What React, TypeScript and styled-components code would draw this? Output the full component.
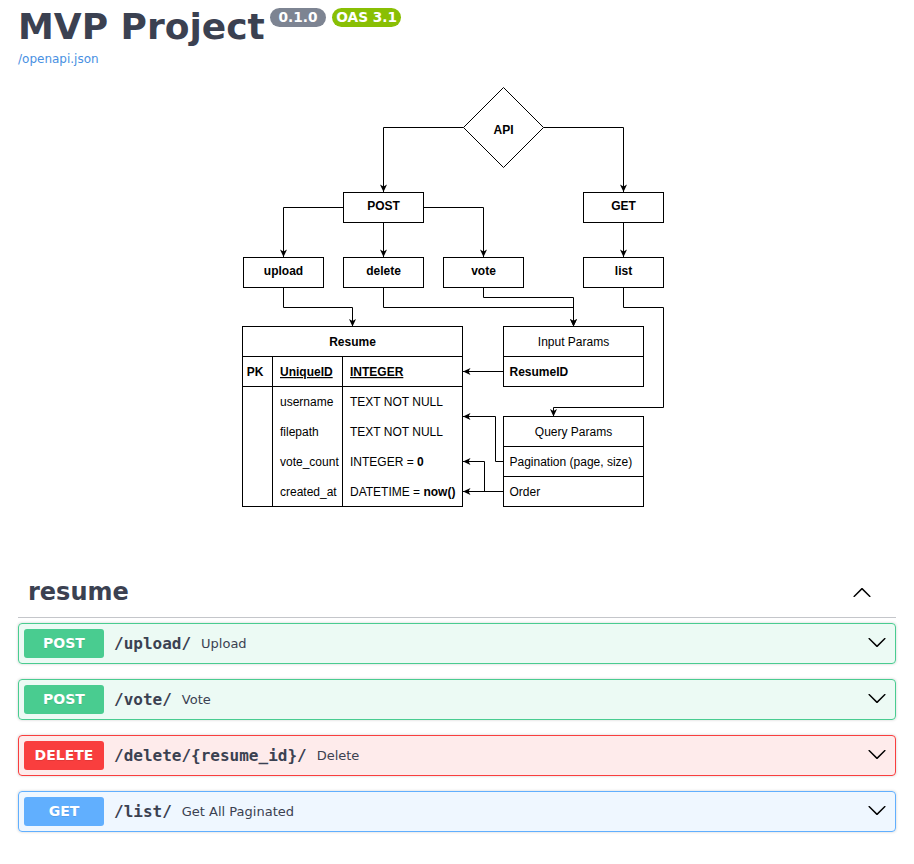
import React from "react";
import styled, { createGlobalStyle, css } from "styled-components";

const GlobalStyle = createGlobalStyle`
  html, body { margin: 0; padding: 0; background: #fff; }
  body { font-family: "DejaVu Sans", sans-serif; color: #3b4151; }
`;

type Method = "post" | "delete" | "get";

const methodColors: Record<Method, { main: string; bg: string }> = {
  post: { main: "#49cc90", bg: "rgba(73,204,144,.1)" },
  delete: { main: "#f93e3e", bg: "rgba(249,62,62,.1)" },
  get: { main: "#61affe", bg: "rgba(97,175,254,.1)" },
};

const Page = styled.div`
  padding: 0 18px 40px;
`;

const Info = styled.section`
  display: flex;
  flex-direction: column;
`;

const TitleRow = styled.div`
  display: flex;
  align-items: flex-start;
  margin-top: 6px;
`;

const Title = styled.h2`
  margin: 0;
  font-family: "DejaVu Sans", sans-serif;
  font-size: 36px;
  line-height: 42px;
  font-weight: 700;
  color: #3b4151;
`;

const Badge = styled.small<{ $bg: string; $gap: number }>`
  display: inline-block;
  margin: 2px 0 0 ${(p) => p.$gap}px;
  padding: 2px 4px;
  border-radius: 57px;
  background: ${(p) => p.$bg};
  color: #fff;
  font-family: "DejaVu Sans", sans-serif;
  font-size: 13.7px;
  line-height: 15px;
  font-weight: 700;
  white-space: pre;
`;

const UrlLink = styled.a`
  align-self: flex-start;
  margin-top: 4px;
  font-family: "DejaVu Sans", sans-serif;
  font-size: 12px;
  line-height: 14px;
  color: #4990e2;
  text-decoration: none;
`;

const DiagramSvg = styled.svg`
  display: block;
  margin-top: 14px;
  font-family: "Liberation Sans", Arial, sans-serif;
  font-size: 12px;
`;

const TagSection = styled.section`
  margin-top: 54px;
  display: flex;
  flex-direction: column;
`;

const TagHeader = styled.div`
  display: flex;
  align-items: center;
  padding: 11px 20px 9px 10px;
  border-bottom: 1px solid rgba(59, 65, 81, 0.3);
`;

const TagTitle = styled.h3`
  flex: 1;
  margin: 0;
  font-family: "DejaVu Sans", sans-serif;
  font-size: 24px;
  line-height: 31px;
  font-weight: 700;
  color: #3b4151;
`;

const ArrowIcon = styled.svg<{ $mr: number; $dy: number }>`
  display: block;
  width: 20px;
  height: 20px;
  margin-right: ${(p) => p.$mr}px;
  transform: translateY(${(p) => p.$dy}px);
  fill: #000;
  flex: none;
`;

const OpList = styled.div`
  display: flex;
  flex-direction: column;
  gap: 15px;
  margin-top: 5px;
`;

const OpBlock = styled.div<{ $method: Method }>`
  border-radius: 4px;
  box-shadow: 0 0 3px rgba(0, 0, 0, 0.19);
  ${(p) => css`
    border: 1px solid ${methodColors[p.$method].main};
    background: ${methodColors[p.$method].bg};
  `}
`;

const Summary = styled.div`
  display: flex;
  align-items: center;
  padding: 5px;
`;

const MethodBadge = styled.span<{ $method: Method }>`
  min-width: 80px;
  padding: 6px 0;
  border-radius: 3px;
  background: ${(p) => methodColors[p.$method].main};
  color: #fff;
  font-family: "DejaVu Sans", sans-serif;
  font-size: 14px;
  line-height: 17px;
  font-weight: 700;
  text-align: center;
  text-shadow: 0 1px 0 rgba(0, 0, 0, 0.1);
`;

const PathText = styled.span`
  padding: 0 10px;
  font-family: "DejaVu Sans Mono", monospace;
  font-size: 16px;
  font-weight: 700;
  color: #3b4151;
`;

const Description = styled.span`
  flex: 1;
  font-family: "DejaVu Sans", sans-serif;
  font-size: 13px;
  color: #3b4151;
`;

const DOWN =
  "M17.418 6.109c.272-.268.709-.268.979 0s.271.701 0 .969l-7.908 7.83c-.27.268-.707.268-.979 0l-7.908-7.83c-.27-.268-.27-.701 0-.969.271-.268.709-.268.979 0L10 13.25l7.418-7.141z";
const UP =
  "M17.418 14.908c.272.268.709.268.979 0s.271-.701 0-.969l-7.908-7.830c-.27-.268-.707-.268-.979 0l-7.908 7.830c-.27.268-.27.701 0 .969.271.268.709.268.979 0L10 7.767l7.418 7.141z";

/* ---------- diagram ---------- */

type Dir = "down" | "left";
const arrowHead = (x: number, y: number, dir: Dir) =>
  dir === "down"
    ? `M${x} ${y} L${x - 3.5} ${y - 7.5} L${x} ${y - 5.5} L${x + 3.5} ${y - 7.5} Z`
    : `M${x} ${y} L${x + 7.5} ${y - 3.5} L${x + 5.5} ${y} L${x + 7.5} ${y + 3.5} Z`;

const edges: { pts: [number, number][]; dir: Dir }[] = [
  { pts: [[463.5, 127.5], [383.5, 127.5], [383.5, 192]], dir: "down" },
  { pts: [[543.5, 127.5], [623.5, 127.5], [623.5, 192]], dir: "down" },
  { pts: [[343.5, 207.5], [283.5, 207.5], [283.5, 257]], dir: "down" },
  { pts: [[383.5, 222.5], [383.5, 257]], dir: "down" },
  { pts: [[423.5, 207.5], [483.5, 207.5], [483.5, 257]], dir: "down" },
  { pts: [[623.5, 222.5], [623.5, 257]], dir: "down" },
  { pts: [[283.5, 287.5], [283.5, 307.5], [352.5, 307.5], [352.5, 326.5]], dir: "down" },
  { pts: [[383.5, 287.5], [383.5, 307.5], [573.5, 307.5], [573.5, 326.5]], dir: "down" },
  { pts: [[483.5, 287.5], [483.5, 297.5], [573.5, 297.5], [573.5, 326.5]], dir: "down" },
  {
    pts: [[623.5, 287.5], [623.5, 307.5], [663.5, 307.5], [663.5, 407.5], [553.5, 407.5], [553.5, 416.5]],
    dir: "down",
  },
  { pts: [[503.5, 371.5], [463, 371.5]], dir: "left" },
  { pts: [[503.5, 461.5], [495.5, 461.5], [495.5, 416.5], [463, 416.5]], dir: "left" },
  { pts: [[503.5, 491.5], [463, 491.5]], dir: "left" },
  { pts: [[484.5, 491.5], [484.5, 461.5], [463, 461.5]], dir: "left" },
];

const nodes: { x: number; y: number; label: string }[] = [
  { x: 343.5, y: 192.5, label: "POST" },
  { x: 583.5, y: 192.5, label: "GET" },
  { x: 243.5, y: 257.5, label: "upload" },
  { x: 343.5, y: 257.5, label: "delete" },
  { x: 443.5, y: 257.5, label: "vote" },
  { x: 583.5, y: 257.5, label: "list" },
];

const resumeRows: { name: string; type: string; bold?: string }[] = [
  { name: "username", type: "TEXT NOT NULL" },
  { name: "filepath", type: "TEXT NOT NULL" },
  { name: "vote_count", type: "INTEGER = ", bold: "0" },
  { name: "created_at", type: "DATETIME = ", bold: "now()" },
];

const Diagram: React.FC = () => (
  <DiagramSvg width={878} height={432} viewBox="18 80 878 432">
    <g fill="none" stroke="#000" strokeWidth={1}>
      <polygon points="503.5,87.5 543.5,127.5 503.5,167.5 463.5,127.5" fill="#fff" />
      {nodes.map((n) => (
        <rect key={n.label} x={n.x} y={n.y} width={80} height={30} fill="#fff" />
      ))}
      {edges.map((e, i) => (
        <polyline key={i} points={e.pts.map((p) => p.join(",")).join(" ")} />
      ))}
      {/* Resume table */}
      <rect x={242.5} y={326.5} width={220} height={180} fill="#fff" />
      <line x1={242.5} y1={356.5} x2={462.5} y2={356.5} />
      <line x1={242.5} y1={386.5} x2={462.5} y2={386.5} />
      <line x1={272.5} y1={356.5} x2={272.5} y2={506.5} />
      <line x1={342.5} y1={356.5} x2={342.5} y2={506.5} />
      {/* Input params */}
      <rect x={503.5} y={326.5} width={140} height={60} fill="#fff" />
      <line x1={503.5} y1={356.5} x2={643.5} y2={356.5} />
      {/* Query params */}
      <rect x={503.5} y={416.5} width={140} height={90} fill="#fff" />
      <line x1={503.5} y1={446.5} x2={643.5} y2={446.5} />
      <line x1={503.5} y1={476.5} x2={643.5} y2={476.5} />
    </g>
    <g fill="#000" stroke="none">
      {edges.map((e, i) => {
        const [x, y] = e.pts[e.pts.length - 1];
        return <path key={i} d={arrowHead(x, y, e.dir)} />;
      })}
    </g>
    <g fill="#000">
      <text x={503.5} y={134} textAnchor="middle" fontWeight="bold">API</text>
      {nodes.map((n) => (
        <text key={n.label} x={n.x + 40} y={n.y + 17.5} textAnchor="middle" fontWeight="bold">
          {n.label}
        </text>
      ))}
      <text x={352.5} y={346} textAnchor="middle" fontWeight="bold">Resume</text>
      <text x={255} y={376} textAnchor="middle" fontWeight="bold">PK</text>
      <text x={280} y={376} fontWeight="bold" textDecoration="underline">UniqueID</text>
      <text x={350} y={376} fontWeight="bold" textDecoration="underline">INTEGER</text>
      {resumeRows.map((r, i) => (
        <React.Fragment key={r.name}>
          <text x={280} y={406 + i * 30}>{r.name}</text>
          <text x={350} y={406 + i * 30}>
            {r.type}
            {r.bold && <tspan fontWeight="bold">{r.bold}</tspan>}
          </text>
        </React.Fragment>
      ))}
      <text x={573.5} y={346} textAnchor="middle">Input Params</text>
      <text x={509.5} y={376} fontWeight="bold">ResumeID</text>
      <text x={573.5} y={436} textAnchor="middle">Query Params</text>
      <text x={509.5} y={466}>Pagination (page, size)</text>
      <text x={509.5} y={496}>Order</text>
    </g>
  </DiagramSvg>
);

const operations: { method: Method; path: string; summary: string }[] = [
  { method: "post", path: "/upload/", summary: "Upload" },
  { method: "post", path: "/vote/", summary: "Vote" },
  { method: "delete", path: "/delete/{resume_id}/", summary: "Delete" },
  { method: "get", path: "/list/", summary: "Get All Paginated" },
];

export default function App() {
  return (
    <>
      <GlobalStyle />
      <Page>
        <Info>
          <TitleRow>
            <Title>MVP Project</Title>
            <Badge $bg="#7d8492" $gap={5}>{" 0.1.0 "}</Badge>
            <Badge $bg="#89bf04" $gap={6}>OAS 3.1</Badge>
          </TitleRow>
          <UrlLink href="#">/openapi.json</UrlLink>
          <Diagram />
        </Info>
        <TagSection>
          <TagHeader>
            <TagTitle>resume</TagTitle>
            <ArrowIcon $mr={4} $dy={-1} viewBox="0 0 20 20">
              <path d={UP} />
            </ArrowIcon>
          </TagHeader>
          <OpList>
            {operations.map((op) => (
              <OpBlock key={op.path} $method={op.method}>
                <Summary>
                  <MethodBadge $method={op.method}>{op.method.toUpperCase()}</MethodBadge>
                  <PathText>{op.path}</PathText>
                  <Description>{op.summary}</Description>
                  <ArrowIcon $mr={3} $dy={-2} viewBox="0 0 20 20">
                    <path d={DOWN} />
                  </ArrowIcon>
                </Summary>
              </OpBlock>
            ))}
          </OpList>
        </TagSection>
      </Page>
    </>
  );
}
